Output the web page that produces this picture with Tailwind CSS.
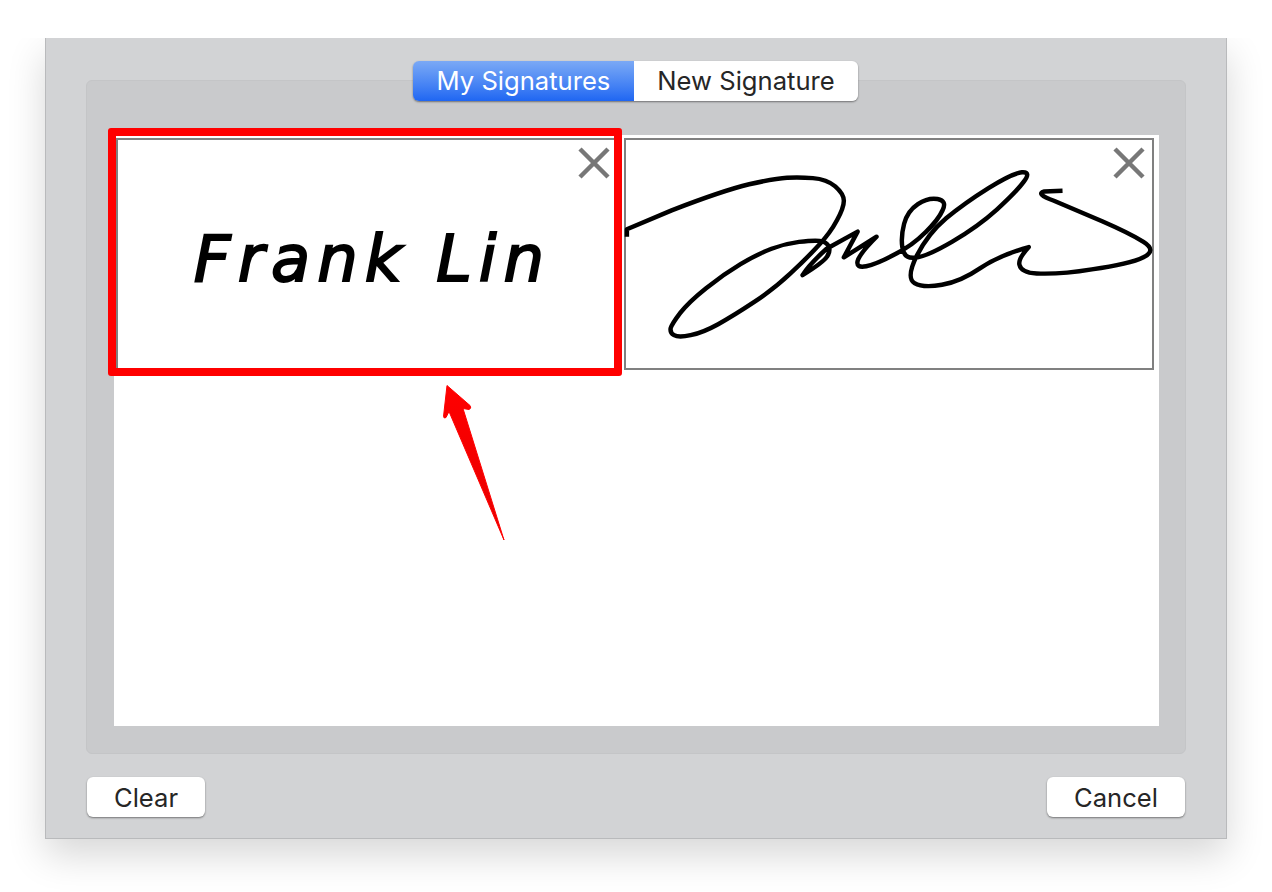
<!DOCTYPE html>
<html>
<head>
<meta charset="utf-8">
<script src="https://cdn.jsdelivr.net/npm/@tailwindcss/browser@4"></script>
</head>
<body class="bg-white font-['Inter','Liberation_Sans',sans-serif]">
<div class="w-[1272px] h-[892px] pt-[38px] overflow-hidden">
  <div class="h-[854px] px-[45px] overflow-hidden">
    <div class="relative w-[1182px] h-[801px] bg-[#d2d3d5] border-x border-b border-[#b9babc] shadow-[0_16px_36px_rgba(0,0,0,0.16)] pt-[42px] px-[40px]">
      <div class="absolute top-[23px] left-[367px] flex w-[445px] h-[40px] rounded-[6px] overflow-hidden z-10 shadow-[0_1px_2px_rgba(0,0,0,0.45)] text-[25.6px] leading-[40px] text-center">
        <div class="w-[221px] text-white bg-gradient-to-b from-[#7ba9f5] to-[#1f66f2]">My Signatures</div>
        <div class="flex-1 bg-white text-[#262626]">New Signature</div>
      </div>
      <div class="w-[1100px] h-[674px] bg-[#c9cacc] rounded-[6px] border border-[#c4c5c7] pt-[54px] pl-[27px] pr-[26px]">
        <div class="relative w-[1045px] h-[591px] bg-white pt-[3px] pl-[2px]">
          <div class="flex gap-[2px]">
            <div class="relative w-[506px] h-[232px] border-2 border-[#808080] flex items-center justify-center">
              <span class="mt-[10px] ml-[7px] whitespace-nowrap text-[64px] tracking-[7px] leading-none italic text-black [-webkit-text-stroke:2px_black] font-['DejaVu_Sans',sans-serif]">Frank Lin</span>
              <svg class="absolute top-[7px] right-[10px] w-[32px] h-[32px]" viewBox="0 0 32 32"><path d="M2 2L30 30M30 2L2 30" stroke="#777777" stroke-width="4.500" fill="none"/></svg>
            </div>
            <div class="relative w-[530px] h-[232px] border-2 border-[#808080]">
              <svg class="absolute top-[-13px] left-[-6px] w-[540px] h-[249px]" viewBox="0 0 1568 726" preserveAspectRatio="none" fill="none"><path d="M20 320V298L150 243Q300 185 375 167Q450 150 485 148Q520 146 560 149Q600 152 625 173Q650 195 650 215Q650 235 630 272Q610 310 575 347Q540 385 495 427Q450 470 390 510Q330 550 285 575Q240 600 205 607Q170 615 157 607Q145 600 147 587Q150 575 175 542Q200 510 250 470Q300 430 350 400Q400 370 440 355Q480 340 520 335Q560 330 580 332Q600 335 606 348Q612 362 601 378Q590 395 530 432Q550 400 600 355L690 305L650 380L745 320Q695 370 690 391Q685 412 715 406Q745 400 797 372Q850 345 887 307Q925 270 937 242Q950 215 922 210Q895 205 865 225Q835 245 825 282Q815 320 820 352Q825 385 857 381Q890 378 965 334Q1040 290 1095 240Q1150 190 1172 160Q1195 130 1167 132Q1140 135 1070 178Q1000 222 947 266Q895 310 862 375Q830 440 855 455Q880 470 935 460Q990 450 1045 412Q1100 375 1187 350Q1155 385 1160 402Q1165 425 1210 427Q1280 430 1370 415Q1480 400 1520 380Q1560 360 1520 335Q1480 310 1400 275Q1300 232 1260 215Q1205 195 1232 188L1285 186" stroke="#000000" stroke-width="13" stroke-linejoin="round"/></svg>
              <svg class="absolute top-[7px] right-[7px] w-[32px] h-[32px]" viewBox="0 0 32 32"><path d="M2 2L30 30M30 2L2 30" stroke="#777777" stroke-width="4.500" fill="none"/></svg>
            </div>
          </div>
          <div class="absolute left-[-6px] top-[-7px] w-[514px] h-[248px] border-8 border-[#ff0000] rounded-[3px]"></div>
          <svg class="absolute left-[321px] top-[245px] w-[72px] h-[165px]" viewBox="0 0 72 165">
            <defs><linearGradient id="a" x1="0" y1="0" x2="0" y2="1"><stop offset="0" stop-color="#ff0000"/><stop offset="1" stop-color="#e60000"/></linearGradient></defs>
            <path d="M12 5.500L35 25.500Q37 28.500 34 29.500L28 28.500L69 160L14 31.500L11 37.500Q9 39 8.500 36.500Z" fill="url(#a)" stroke="#ff0000" stroke-width="1" stroke-linejoin="round"/>
          </svg>
        </div>
      </div>
      <div class="flex justify-between mt-[23px] pl-[1px] pr-[1px] text-[25.6px] leading-[42px] text-[#262626] text-center">
        <div class="w-[118px] h-[40px] bg-white rounded-[6px] shadow-[0_1px_2px_rgba(0,0,0,0.45)]">Clear</div>
        <div class="w-[138px] h-[40px] bg-white rounded-[6px] shadow-[0_1px_2px_rgba(0,0,0,0.45)]">Cancel</div>
      </div>
    </div>
  </div>
</div>
</body>
</html>
